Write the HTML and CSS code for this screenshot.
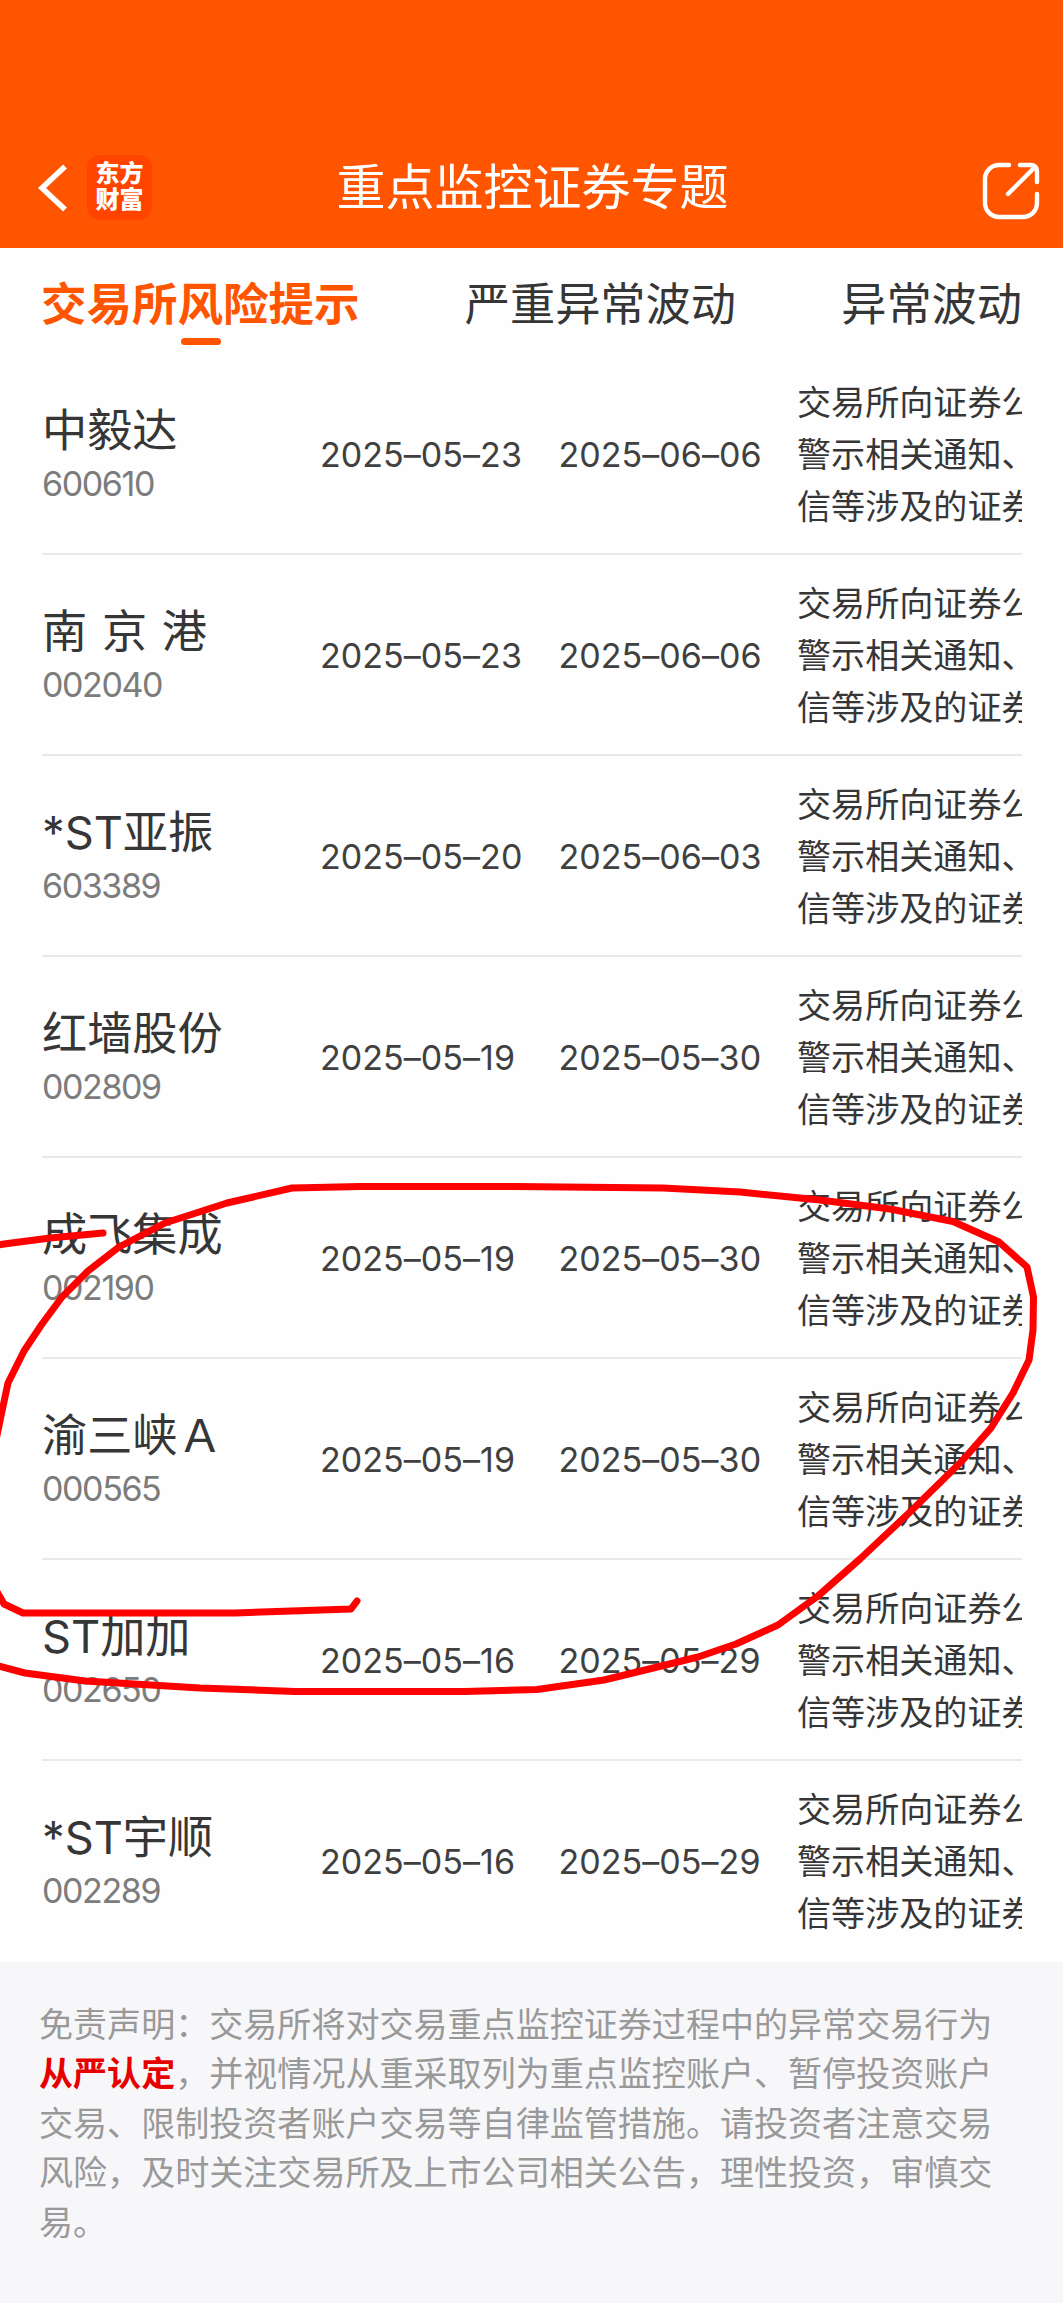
FILE: index.html
```html
<!DOCTYPE html>
<html lang="zh-CN">
<head>
    <meta charset="utf-8">
    <title>重点监控证券专题</title>
    <link rel="stylesheet" href="styles.css">
</head>
<body>
    <header class="navbar">
        <div class="nav-left">
            <svg class="back" viewBox="0 0 32 50">
                <polyline points="28,3.5 5,25 28,46.5"/>
            </svg>
            <div class="logo">东方<br>财富</div>
        </div>
        <h1>重点监控证券专题</h1>
        <svg class="share" viewBox="0 0 58 58">
            <path d="M27 3H17A14 14 0 0 0 3 17V41A14 14 0 0 0 17 55H41A14 14 0 0 0 55 41V32"/>
            <path d="M38 3H48Q55 3 55 10V20M53 5L26 32"/>
        </svg>
    </header>

    <nav class="tabs">
        <a class="tab active">交易所风险提示</a>
        <a class="tab">严重异常波动</a>
        <a class="tab">异常波动</a>
    </nav>

    <main class="list">
        <div class="row">
            <div class="stock"><div class="name">中毅达</div><div class="code">600610</div></div>
            <div class="date">2025–05–23</div>
            <div class="date">2025–06–06</div>
            <div class="reason">交易所向证券公司<br>警示相关通知、<br>信等涉及的证券</div>
        </div>
        <div class="row">
            <div class="stock"><div class="name">南 京 港</div><div class="code">002040</div></div>
            <div class="date">2025–05–23</div>
            <div class="date">2025–06–06</div>
            <div class="reason">交易所向证券公司<br>警示相关通知、<br>信等涉及的证券</div>
        </div>
        <div class="row">
            <div class="stock"><div class="name">*ST亚振</div><div class="code">603389</div></div>
            <div class="date">2025–05–20</div>
            <div class="date">2025–06–03</div>
            <div class="reason">交易所向证券公司<br>警示相关通知、<br>信等涉及的证券</div>
        </div>
        <div class="row">
            <div class="stock"><div class="name">红墙股份</div><div class="code">002809</div></div>
            <div class="date">2025–05–19</div>
            <div class="date">2025–05–30</div>
            <div class="reason">交易所向证券公司<br>警示相关通知、<br>信等涉及的证券</div>
        </div>
        <div class="row">
            <div class="stock"><div class="name">成飞集成</div><div class="code">002190</div></div>
            <div class="date">2025–05–19</div>
            <div class="date">2025–05–30</div>
            <div class="reason">交易所向证券公司<br>警示相关通知、<br>信等涉及的证券</div>
        </div>
        <div class="row">
            <div class="stock"><div class="name">渝三峡Ａ</div><div class="code">000565</div></div>
            <div class="date">2025–05–19</div>
            <div class="date">2025–05–30</div>
            <div class="reason">交易所向证券公司<br>警示相关通知、<br>信等涉及的证券</div>
        </div>
        <div class="row">
            <div class="stock"><div class="name">ST加加</div><div class="code">002650</div></div>
            <div class="date">2025–05–16</div>
            <div class="date">2025–05–29</div>
            <div class="reason">交易所向证券公司<br>警示相关通知、<br>信等涉及的证券</div>
        </div>
        <div class="row">
            <div class="stock"><div class="name">*ST宇顺</div><div class="code">002289</div></div>
            <div class="date">2025–05–16</div>
            <div class="date">2025–05–29</div>
            <div class="reason">交易所向证券公司<br>警示相关通知、<br>信等涉及的证券</div>
        </div>
    </main>

    <footer class="disclaimer">
        免责声明：交易所将对交易重点监控证券过程中的异常交易行为<b>从严认定</b>，并视情况从重采取列为重点监控账户、暂停投资账户交易、限制投资者账户交易等自律监管措施。请投资者注意交易风险，及时关注交易所及上市公司相关公告，理性投资，审慎交易。
    </footer>

    <!-- hand-drawn marker -->
    <svg class="marker" viewBox="0 0 1063 2303">
        <polyline points="-8,1246 4,1244 50,1238 103,1233"/>
        <polyline points="-4,1440 2,1411 8,1383 24,1351 42,1324 62,1297 88,1271 119,1247 165,1223 227,1203 292,1188 360,1186.5 515,1186.5 663,1188 740,1192 820,1200 890,1209 953,1221.5 999,1242 1027,1267 1033.5,1297 1033,1330 1029,1360 1013,1393 991,1428 962,1461 910,1512 860,1559 818,1596 778,1625 736,1644 698,1657 645,1670 604,1680 537,1689.5 465,1691.5 295,1691.5 200,1688 85,1681 25,1673 -5,1665"/>
        <polyline points="-4,1590 4,1604 23,1613 235,1613 351,1609 357,1601"/>
    </svg>
</body>
</html>
```
FILE: styles.css
```css
* {
    box-sizing: border-box;
}
body {
    position: relative;
    margin: 0;
    width: 1063px;
    height: 2303px;
    overflow: hidden;
    background: #fefefe;
    color: #363636;
    font-family: Inter, "Noto Sans CJK SC", sans-serif;
    font-feature-settings: "calt" 0;
}
.navbar {
    display: flex;
    align-items: flex-end;
    justify-content: space-between;
    height: 248px;
    padding: 0 23px 28px 37px;
    background: #ff5500;
    color: #fff;
}
.nav-left {
    display: flex;
    align-items: center;
    width: 260px;
    gap: 18px;
}
.back {
    width: 32px;
    height: 50px;
}
.back polyline, .share path {
    fill: none;
    stroke: #fff;
    stroke-width: 5.5;
}
.logo {
    width: 65px;
    height: 65px;
    padding-top: 6px;
    border-radius: 13px;
    background: #ff4400;
    font-size: 24px;
    font-weight: 900;
    line-height: 26px;
    text-align: center;
}
.navbar h1 {
    margin: 0;
    font-size: 49px;
    font-weight: 400;
    line-height: 64px;
}
.share {
    width: 58px;
    height: 58px;
    margin-left: 214px;
}
.share path {
    stroke-width: 4.4;
    stroke-linecap: round;
}
.tabs {
    display: flex;
    justify-content: space-between;
    height: 106px;
    padding: 24px 41px 0;
}
.tab {
    display: flex;
    flex-direction: column;
    align-items: center;
    font-size: 45.2px;
    line-height: 66px;
}
.tab.active {
    color: #ff5500;
    font-size: 45.5px;
    font-weight: 700;
}
.tab.active::after {
    content: "";
    width: 40px;
    height: 7px;
    margin-left: 2px;
    border-radius: 4px;
    background: #ff5500;
}
.list {
    padding: 0 41px 0 42px;
}
.row {
    display: flex;
    align-items: center;
    height: 201px;
    padding-top: 3px;
    border-bottom: 2px solid #e9e9e9;
}
.row:last-child {
    border-bottom: none;
    padding-top: 1px;
}
.stock {
    width: 278px;
}
.name {
    font-size: 45.2px;
    line-height: 58px;
    word-spacing: 2px;
}
.code {
    color: #7c7c7c;
    font-size: 34px;
    font-weight: 400;
    line-height: 48px;
    letter-spacing: -1.4px;
}
.date {
    width: 238.5px;
    padding-bottom: 2px;
    color: #404040;
    font-size: 34px;
    letter-spacing: 0.05px;
}
.reason {
    flex: 1;
    overflow: hidden;
    font-size: 34.1px;
    line-height: 52px;
    white-space: nowrap;
}
.disclaimer {
    height: 341px;
    padding: 38px 40px 0 39px;
    background: #f7f7fa;
    color: #999;
    font-size: 34.05px;
    line-height: 49.4px;
}
.disclaimer b {
    color: #e60000;
}
.marker {
    position: absolute;
    top: 0;
    left: 0;
    width: 1063px;
    height: 2303px;
}
.marker polyline {
    fill: none;
    stroke: #fe0000;
    stroke-width: 7;
    stroke-linecap: round;
    stroke-linejoin: round;
}
```
